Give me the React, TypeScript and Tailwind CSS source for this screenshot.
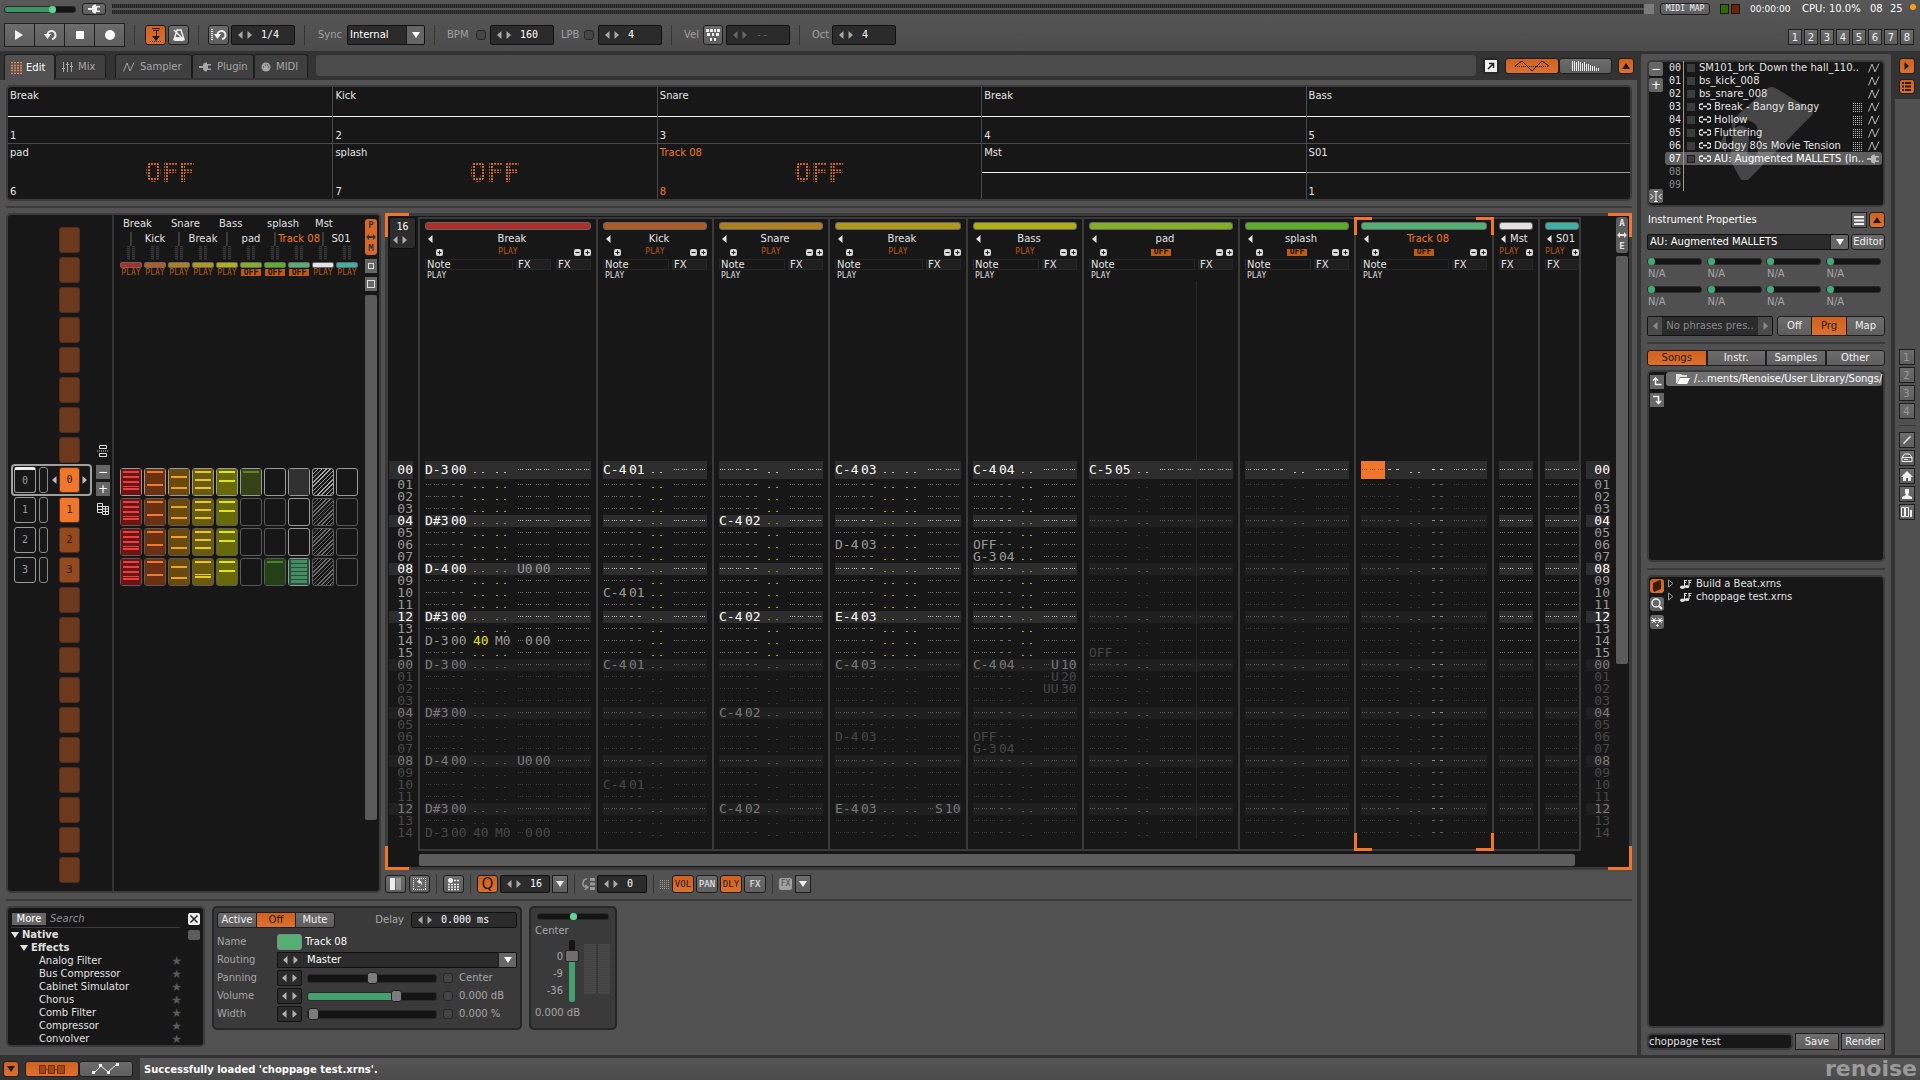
import { ReactNode } from "react";
import clsx from "clsx";

type Status = "PLAY" | "OFF";

type Track = {
  name: string;
  color: string;
  status: Status;
  // one letter per sub column: n = note, i = instrument, v = volume, d = delay, p = panning, f = half of an fx pair, g = gap
  cols: string;
  fx?: number;
  now: Record<number, string>;
  next: Record<number, string>;
};

const breakRows = {
  0: "D-3 00",
  4: "D#3 00",
  8: "D-4 00 .. .. U0 00",
  12: "D#3 00",
  14: "D-3 00 40 M0 -0 00",
};
const kickRows = { 0: "C-4 01", 10: "C-4 01" };
const snareRows = { 4: "C-4 02", 12: "C-4 02" };

const tracks: Track[] = [
  { name: "Break", color: "#aa2e2a", status: "PLAY", cols: "nivdffgff", fx: 2, now: breakRows, next: breakRows },
  { name: "Kick", color: "#ae5b28", status: "PLAY", cols: "nivff", now: kickRows, next: kickRows },
  { name: "Snare", color: "#ae7f22", status: "PLAY", cols: "nivff", now: snareRows, next: snareRows },
  {
    name: "Break",
    color: "#ae991c",
    status: "PLAY",
    cols: "nivdff",
    now: { 0: "C-4 03", 6: "D-4 03", 12: "E-4 03" },
    next: { 0: "C-4 03", 6: "D-4 03", 12: "E-4 03 .. .. -S 10" },
  },
  {
    name: "Bass",
    color: "#adb016",
    status: "PLAY",
    cols: "nivff",
    now: { 0: "C-4 04", 6: "OFF", 7: "G-3 04" },
    next: { 0: "C-4 04 .. -U 10", 1: "--- -- .. -U 20", 2: "--- -- .. UU 30", 6: "OFF", 7: "G-3 04" },
  },
  { name: "pad", color: "#84ad28", status: "OFF", cols: "nivffgff", now: { 0: "C-5 05", 15: "OFF" }, next: {} },
  { name: "splash", color: "#5cae28", status: "OFF", cols: "nivff", now: {}, next: {} },
  { name: "Track 08", color: "#54b072", status: "OFF", cols: "nivpff", now: {}, next: {} },
  { name: "Mst", color: "#e2e2e2", status: "PLAY", cols: "ff", now: {}, next: {} },
  { name: "S01", color: "#3fb0a4", status: "PLAY", cols: "ff", now: {}, next: {} },
];

const CURRENT = 7;

const instruments = [
  { name: "SM101_brk_Down the hall_110..", wave: true },
  { name: "bs_kick_008", wave: true },
  { name: "bs_snare_008", wave: true },
  { name: "Break - Bangy Bangy", link: true, phrase: true, wave: true },
  { name: "Hollow", link: true, phrase: true, wave: true },
  { name: "Fluttering", link: true, phrase: true, wave: true },
  { name: "Dodgy 80s Movie Tension", link: true, phrase: true, wave: true },
  { name: "AU: Augmented MALLETS (In..", link: true, plug: true },
  { name: "" },
  { name: "" },
];

const effects = ["Analog Filter", "Bus Compressor", "Cabinet Simulator", "Chorus", "Comb Filter", "Compressor", "Convolver"];

const pad2 = (n: number) => String(n).padStart(2, "0");

const grayBtn = "bg-linear-to-b from-[#6c6c6c] to-[#5e5e5e] border border-[#1e1e1e] text-[#f0f0f0]";
const orangeBtn = "bg-linear-to-b from-[#d0611f] to-[#dc7030] border border-[#1e1e1e] text-[#1c1c1c]";
const sunken = "bg-[#2b2b2b] border border-[#111] rounded-[2px]";
const well = "bg-[#171717] border-2 border-[#3a3a3a] rounded-[5px]";

function Btn({ on, className, label, children }: { on?: boolean; className?: string; label?: string; children?: ReactNode }) {
  return (
    <button
      aria-label={label}
      className={clsx("flex flex-none items-center justify-center rounded-[3px] leading-none", on ? orangeBtn : grayBtn, className)}
    >
      {children}
    </button>
  );
}

/* ---------- icons ---------- */

function Svg({ w = 12, h = 12, children, className }: { w?: number; h?: number; children: ReactNode; className?: string }) {
  return (
    <svg width={w} height={h} viewBox={`0 0 ${w} ${h}`} className={clsx("flex-none", className)} fill="currentColor">
      {children}
    </svg>
  );
}

const Left = () => <Svg w={5} h={8}><path d="M4.5 0v8L0 4z" /></Svg>;
const Right = () => <Svg w={5} h={8}><path d="M.5 0v8L5 4z" /></Svg>;
const Down = () => <Svg w={8} h={6}><path d="M0 0h8L4 6z" /></Svg>;
const Up = () => <Svg w={8} h={6}><path d="M0 6h8L4 0z" /></Svg>;
const Wave = () => (
  <Svg w={12} h={10}><path d="M.5 9.5 4 1l3 8L11 .5" fill="none" stroke="currentColor" /></Svg>
);
const Plug = () => (
  <Svg w={13} h={10}><path d="M0 4h4v2H0zM4 2.5C5 1 6 .5 8 .5V2h4v1.5H9v3h3V8H8v1.5C6 9.5 5 9 4 7.5z" /></Svg>
);
const DotGrid = () => (
  <Svg w={12} h={12}>
    <path d="M1 .5h11M1 3.500h11M1 6h11M1 8.500h11M1 11.500h11" stroke="currentColor" strokeWidth="1.500" strokeDasharray="2 1" />
  </Svg>
);
const Loop = () => (
  <Svg w={14} h={12}>
    <path d="M4.500 6A4 4 0 1 1 9 10" fill="none" stroke="currentColor" strokeWidth="2" />
    <path d="M1 5h7l-3.500 5z" />
  </Svg>
);
const Phrase = () => (
  <Svg w={10} h={10}>
    <path d="M0 1.500h10M0 3.500h10M0 5.500h10M0 7.500h10M0 9.500h10" stroke="currentColor" strokeDasharray="1 1" />
  </Svg>
);
const Link = () => (
  <Svg w={12} h={7}>
    <path d="M4 1H2.500a1.500 1.500 0 0 0 0 5H4M8 1h1.500a1.500 1.500 0 0 1 0 5H8M4 3.500h4" fill="none" stroke="currentColor" strokeWidth="1.300" />
  </Svg>
);

/* ---------- small controls ---------- */

function Spin({ value, label, className, dim }: { value: string; label: string; className?: string; dim?: boolean }) {
  return (
    <div className={clsx("flex flex-none items-center gap-1 pl-1.5", sunken, dim ? "text-[#666]" : "text-[#a8a8a8]", className)}>
      <button aria-label={`${label} down`}><Left /></button>
      <button aria-label={`${label} up`}><Right /></button>
      <input
        aria-label={label}
        defaultValue={value}
        className={clsx("w-0 flex-1 bg-transparent pl-[5px] font-['DejaVu_Sans_Mono',monospace] outline-none", dim ? "text-[#666]" : "text-white")}
      />
    </div>
  );
}

function Select({ value, label, className, pad }: { value: string; label: string; className?: string; pad?: string }) {
  return (
    <div className={clsx("flex overflow-hidden", sunken, className)}>
      <select aria-label={label} className={clsx("min-w-0 flex-1 appearance-none bg-transparent text-white outline-none", pad ?? "pl-0.5")}>
        <option>{value}</option>
      </select>
      <span className="flex w-[18px] flex-none items-center justify-center border-l border-[#1e1e1e] bg-[#666] text-white">
        <Down />
      </span>
    </div>
  );
}

function Check({ label }: { label: string }) {
  return <input type="checkbox" aria-label={label} className="size-2.5 flex-none appearance-none rounded-[3px] border border-[#262626] bg-[#454545]" />;
}

const rangeBase =
  "block min-w-0 appearance-none rounded-[3px] border border-[#2a2a2a] bg-[#141414] [&::-webkit-slider-thumb]:appearance-none [&::-webkit-slider-thumb]:border [&::-webkit-slider-thumb]:border-[#1e1e1e]";
const greenDot =
  "h-[7px] [&::-webkit-slider-thumb]:size-[7px] [&::-webkit-slider-thumb]:rounded-[3px] [&::-webkit-slider-thumb]:border-0";
const grayThumb =
  "h-[9px] [&::-webkit-slider-thumb]:h-3 [&::-webkit-slider-thumb]:w-[11px] [&::-webkit-slider-thumb]:rounded-[3px] [&::-webkit-slider-thumb]:bg-[#7c7c7c]";

const Sep = () => <div className="h-5 w-px flex-none bg-[#363636]" />;
const Rule = ({ className }: { className?: string }) => <div className={clsx("h-0.5 flex-none bg-[#3a3a3a]", className)} />;

/* ---------- header ---------- */

function Header() {
  return (
    <header className="h-[51px] flex-none bg-linear-to-b from-[#575757] to-[#4c4c4c] text-[#a0a0a0]">
      <div className="flex h-[18px] items-center gap-[6px] pl-1 pr-1">
        <input
          type="range"
          aria-label="Master volume"
          defaultValue={70}
          className={clsx(rangeBase, greenDot, "w-[72px] bg-linear-to-r from-[#3c9467] from-68% to-[#141414] to-68% [&::-webkit-slider-thumb]:bg-[#5cd690]")}
        />
        <Btn className="h-3 w-6" label="Audio"><Plug /></Btn>
        <div className="flex flex-1 flex-col gap-0.5">
          <div className="h-1 bg-[repeating-linear-gradient(90deg,#222_0px,#222_1px,#3c3c3c_1px,#3c3c3c_2px)]" />
          <div className="h-1 bg-[repeating-linear-gradient(90deg,#222_0px,#222_1px,#3c3c3c_1px,#3c3c3c_2px)]" />
        </div>
        <div className="-ml-1.5 h-2.5 w-2.5 bg-[#7a7a7a]" />
        <Btn className="h-3 w-[50px] font-['DejaVu_Sans_Mono',monospace] text-[8px]">MIDI MAP</Btn>
        <div className="flex gap-0.5 pl-1 pr-1">
          <div className="h-2.5 w-[9px] border border-[#161616] bg-[#2f6c08]" />
          <div className="h-2.5 w-[9px] border border-[#161616] bg-[#6c2408]" />
        </div>
        <span className="w-[46px] text-[9px] text-white">00:00:00</span>
        <span className="w-[62px] whitespace-nowrap text-white">CPU: 10.0%</span>
        <span className="w-3.5 text-white">08</span>
        <span className="w-3.5 text-white">25</span>
        <span className="mb-1 size-1.5 rounded-full bg-[#ff9d0a]" />
      </div>
      <div className="flex h-[33px] items-center gap-[9px] pl-1 pr-1.5">
        <div className="flex">
          <Btn className="h-6 w-[31px] rounded-none" label="Play"><Svg w={9} h={10}><path d="M0 0v10l8-5z" /></Svg></Btn>
          <Btn className="-ml-px h-6 w-[31px] rounded-none" label="Loop"><Loop /></Btn>
          <Btn className="-ml-px h-6 w-[31px] rounded-none" label="Stop"><span className="size-2 bg-white" /></Btn>
          <Btn className="-ml-px h-6 w-[31px] rounded-none" label="Record"><span className="size-2.5 rounded-full bg-white" /></Btn>
        </div>
        <Sep />
        <div className="flex gap-0.5 pl-px">
          <Btn on className="h-5 w-[21px]" label="Follow">
            <Svg w={12} h={14}>
              <path d="M2 .5h8M3 2.500h6M6.500 2v8" fill="none" stroke="currentColor" />
              <path d="M2 8h8l-4 5z" />
              <path d="M0 13.500h12" stroke="currentColor" strokeDasharray="1 1" />
            </Svg>
          </Btn>
          <Btn className="h-5 w-[21px]" label="Metronome">
            <Svg w={12} h={14}><path d="M4 2h4l3 9.500H1zM1 2l7 7" fill="none" stroke="currentColor" strokeWidth="1.500" /><path d="M1.500 9h9v4h-9z" /></Svg>
          </Btn>
        </div>
        <Sep />
        <div className="flex gap-0.5">
          <Btn className="h-5 w-[21px]" label="Block loop"><Svg w={2} h={12}><path d="M1 0v12" stroke="currentColor" strokeWidth="2" strokeDasharray="1 1" /></Svg><Loop /></Btn>
          <Spin className="h-5 w-16" value="1/4" label="Block size" />
        </div>
        <Sep />
        <div className="flex items-center gap-[3px] pl-1">
          <span className="w-[26px]">Sync</span>
          <Select className="h-5 w-[78px]" value="Internal" label="Sync" />
        </div>
        <Sep />
        <div className="flex items-center gap-1 pl-[3px]">
          <span className="w-[25px]">BPM</span>
          <Check label="Automate BPM" />
          <Spin className="h-5 w-16" value="160" label="BPM" />
          <span className="ml-[3px] w-[19px]">LPB</span>
          <Check label="Automate LPB" />
          <Spin className="h-5 w-16" value="4" label="LPB" />
        </div>
        <Sep />
        <div className="flex items-center gap-[3px] pl-[3px]">
          <span className="w-4">Vel</span>
          <Btn className="h-5 w-5" label="Keyboard velocity">
            <Svg w={14} h={12}><path d="M0 0h3v3H0zM4 0h3v3H4zM8 0h2v3H8zM11 0h3v3h-3zM1 4h3v3H1zM6 4h2v3H6zM10 4h3v3h-3zM4 9h2v3H4zM8 9h2v3H8z" /></Svg>
          </Btn>
          <Spin dim className="h-5 w-16" value="--" label="Velocity" />
        </div>
        <Sep />
        <div className="flex items-center gap-0.5 pl-[3px]">
          <span className="w-[18px]">Oct</span>
          <Spin className="h-5 w-16" value="4" label="Octave" />
        </div>
        <div className="mb-1.5 ml-auto flex gap-0.5 self-end">
          {[1, 2, 3, 4, 5, 6, 7, 8].map((n) => (
            <Btn key={n} className="h-4 w-[14px] rounded-none pt-0.5">{n}</Btn>
          ))}
        </div>
      </div>
    </header>
  );
}

/* ---------- tabs ---------- */

function TabStrip() {
  const tab = "flex items-center rounded-t-[3px] border border-b-0 border-[#1c1c1c]";
  const idle = "mb-0.5 gap-[5px] bg-[#3f3f3f] text-[#a6a6a6]";
  return (
    <nav className="flex h-[29px] flex-none pl-1 pr-[3px] pt-[3px]">
      <button className={clsx(tab, "w-[51px] gap-1 bg-[#515151] pl-[5px] text-white")}><span className="text-[#e8875a]"><DotGrid /></span>Edit</button>
      <button className={clsx(tab, idle, "w-[51px] pl-1.5")}>
        <Svg w={11} h={10}><path d="M1.500 0v10M5.500 0v10M9.500 0v10M0 6.500h3M4 2.500h3M8 4.500h3" stroke="currentColor" /></Svg>Mix
      </button>
      <button className={clsx(tab, idle, "ml-[9px] w-[77px] pl-[7px]")}><Wave />Sampler</button>
      <button className={clsx(tab, idle, "w-[62px] pl-1.5")}><Plug />Plugin</button>
      <button className={clsx(tab, idle, "w-[54px] pl-1.5")}>
        <Svg w={10} h={10}><circle cx="5" cy="5" r="4.500" /><path d="M2 5h1M4 3h1M6 3h1M7 5h1" stroke="#333" /></Svg>MIDI
      </button>
      <div className="ml-2 mr-[7px] mt-px h-[21px] flex-1 rounded-[3px] bg-[#4b4b4b]" />
      <div className="mt-1 flex h-4 items-center gap-1.5">
        <button aria-label="Detach" className="flex size-4 items-center justify-center rounded-[2px] border-2 border-[#262626] bg-[#eee] text-[#222]">
          <Svg w={8} h={8}><path d="M1 7 6 2M2 1.500h4.500V6" fill="none" stroke="currentColor" strokeWidth="1.500" /></Svg>
        </button>
        <div className="flex">
          <Btn on className="h-4 w-[54px]" label="Scopes">
            <Svg w={34} h={10}><path d="M0 5 7 0l10 10L27 0l7 5" fill="none" stroke="currentColor" /><path d="M0 5.500h34" stroke="currentColor" strokeDasharray="1 1" /></Svg>
          </Btn>
          <Btn className="h-4 w-[53px]" label="Spectrum">
            <Svg w={28} h={10}><path d="M.5 0v10M2.500 0v10M4.500 1v9M6.500 0v10M8.500 1v9M10.500 2v8M12.500 1v9M14.500 3v7M16.500 3v7M18.500 4v6M20.500 5v5M22.500 5v5M24.500 7v3M26.500 7v3" stroke="currentColor" /></Svg>
          </Btn>
        </div>
        <Btn on className="size-4" label="Collapse"><Up /></Btn>
      </div>
    </nav>
  );
}

/* ---------- track scopes ---------- */

function Scopes() {
  return (
    <section className={clsx(well, "grid h-[116px] flex-none grid-cols-5 grid-rows-2 overflow-hidden")}>
      {tracks.map((t, i) => (
        <div
          key={i}
          className={clsx(
            "flex flex-col justify-between px-0.5 pb-px pt-[3px]",
            i % 5 > 0 && "border-l border-[#4a4a4a]",
            i > 4 && "border-t border-[#4a4a4a]",
            i === CURRENT ? "text-[#f07830]" : "text-[#e4e4e4]"
          )}
        >
          <span className="leading-3">{t.name}</span>
          {t.status === "OFF" ? (
            <span className="self-center font-['DejaVu_Sans_Mono',monospace] text-[28px] font-bold leading-5 text-[#d0651f] [mask-composite:intersect] [mask-image:repeating-linear-gradient(90deg,#000_0px,#000_2px,transparent_2px,transparent_3px),repeating-linear-gradient(#000_0px,#000_2px,transparent_2px,transparent_3px)]">
              OFF
            </span>
          ) : (
            <div className={clsx("-mx-0.5 h-px", i === 9 ? "bg-[#9a9a9a]" : "bg-[#f0f0f0]")} />
          )}
          <span className="h-3 leading-3">{i < 8 ? i + 1 : i === 9 ? 1 : ""}</span>
        </div>
      ))}
    </section>
  );
}

/* ---------- pattern matrix ---------- */

type Block = { bg: string; fg: string; bars: number[][] };

const redBlock: Block = { bg: "#6a1414", fg: "#e84040", bars: [[3, 2], [8, 2], [13, 2], [18, 1], [20, 2]] };
const kickBlock: Block = { bg: "#6a3010", fg: "#e87a34", bars: [[3, 2], [16, 2]] };
const snareBlock: Block = { bg: "#6a4a0c", fg: "#e8a428", bars: [[8, 2], [19, 2]] };
const hatBlock: Block = { bg: "#6a5a0c", fg: "#e8c828", bars: [[3, 2], [11, 2], [19, 2]] };
const hatBlock2: Block = { bg: "#6a5a0c", fg: "#e8c828", bars: [[3, 2], [16, 1], [18, 2]] };
const bassBlock: Block = { bg: "#686a0a", fg: "#e0e41c", bars: [[3, 2], [12, 2]] };
const padBlock: Block = { bg: "#344216", fg: "#668428", bars: [[3, 2]] };
const splashBlock: Block = { bg: "#244016", fg: "#4a8428", bars: [[3, 2]] };
const synthBlock: Block = { bg: "#24503a", fg: "#458c62", bars: [[2, 3], [6, 3], [10, 3], [14, 3], [18, 3], [22, 3]] };
const cursorBlock: Block = { bg: "#303030", fg: "#303030", bars: [] };

const matrix: (Block | null)[][] = [
  [redBlock, kickBlock, snareBlock, hatBlock, bassBlock, padBlock, null, cursorBlock, null, null],
  [redBlock, kickBlock, snareBlock, hatBlock, bassBlock, null, null, null, null, null],
  [redBlock, kickBlock, snareBlock, hatBlock, bassBlock, null, null, null, null, null],
  [redBlock, kickBlock, snareBlock, hatBlock2, bassBlock, null, splashBlock, synthBlock, null, null],
];

function MatrixCell({ row, col }: { row: number; col: number }) {
  const block = matrix[row][col];
  const bright = row === 0 || col === CURRENT;
  return (
    <button
      aria-label={`Pattern ${row}, ${tracks[col].name}`}
      className={clsx(
        "h-7 w-[22px] rounded-[3px] border",
        bright ? "border-[#9a9a9a]" : "border-[#5a5a5a]",
        col === 8 && (row === 0
          ? "bg-[repeating-linear-gradient(135deg,#a0a0a0_0px,#a0a0a0_1px,#171717_1px,#171717_3px)]"
          : "bg-[repeating-linear-gradient(135deg,#6a6a6a_0px,#6a6a6a_1px,#171717_1px,#171717_3px)]")
      )}
    >
      {block && (
        <svg width="20" height="26" viewBox="0 0 20 26" shapeRendering="crispEdges">
          <rect width="20" height="26" fill={block.bg} />
          {block.bars.map(([y, h]) => (
            <rect key={y} x="2" y={y - 1} width="16" height={h} fill={block.fg} />
          ))}
        </svg>
      )}
    </button>
  );
}

function StatusTag({ status }: { status: Status }) {
  return (
    <button
      className={clsx(
        "flex h-[7px] w-5 flex-none items-center justify-center font-['DejaVu_Sans_Mono',monospace] text-[8px] leading-none",
        status === "OFF" ? "bg-[#bd5a18] font-bold text-[#171717]" : "text-[#bd5a18]"
      )}
    >
      {status}
    </button>
  );
}

function Sequencer() {
  return (
    <div className="flex w-[106px] flex-none flex-col gap-1 border-r-2 border-[#333] pt-3">
      {Array.from({ length: 22 }, (_, i) => {
        const n = i - 8;
        const live = n >= 0 && n < 4;
        return (
          <div key={i} className={clsx("flex h-[26px] flex-none items-center", live ? "pl-1.5" : "pl-[51px]")}>
            {live && (
              <div className="flex w-[45px] items-center gap-[3px]">
                <button className={clsx("flex h-[26px] w-[22px] items-center justify-center rounded-[3px] border border-[#999] font-['DejaVu_Sans_Mono',monospace] text-[#999]", n === 0 && "border-t-[3px] border-t-[#eee]")}>
                  {n}
                </button>
                <span className="h-[26px] w-[9px] rounded-[3px] border border-[#888]" />
                {n === 0 && <span className="pl-px text-[#bbb]"><Left /></span>}
              </div>
            )}
            <button
              aria-label={live ? undefined : "Empty slot"}
              className={clsx(
                "h-[26px] w-[21px] rounded-[3px] border border-[#552c17] font-['DejaVu_Sans_Mono',monospace] text-[#1c1c1c]",
                n === 0 || n === 1 ? "bg-[#f0762c]" : live ? "bg-[#94491f]" : "bg-[#6c391f]"
              )}
            >
              {live ? n : ""}
            </button>
            {n === 0 && <span className="pl-0.5 text-[#bbb]"><Right /></span>}
          </div>
        );
      })}
    </div>
  );
}

function PatternMatrix() {
  return (
    <section className={clsx(well, "relative flex w-[375px] flex-none")}>
      <Sequencer />
      {/* frame round the playing slot, with its insert and delete buttons */}
      <div className="pointer-events-none absolute left-[3px] top-[249px] h-8 w-[81px] rounded-[4px] border-2 border-[#a0a0a0]" />
      <div className="absolute left-[88px] top-[229px] flex w-[14px] flex-col items-center gap-[3px] text-[#ddd]">
        <Svg w={12} h={14} className="mb-1"><path d="M2.500 1.500h7v3h-7zM2.500 9.500h7v3h-7z" fill="none" stroke="currentColor" /><path d="M0 7h12" stroke="currentColor" strokeDasharray="1 1" /></Svg>
        <button className="flex h-[14px] w-[14px] items-center justify-center bg-[#666] text-xs text-white">−</button>
        <button className="flex h-[14px] w-[14px] items-center justify-center bg-[#666] text-xs text-white">+</button>
        <Svg w={12} h={12} className="mt-1"><path d="M.5.500h5v9h-5zM5.500 3.500h6v8h-6zM.5 3.500h5M.5 6.500h5M5.500 6h6M5.500 8.500h6M8.500 3.500v8" fill="none" stroke="currentColor" /></Svg>
      </div>

      <div className="flex min-w-0 flex-1 flex-col pl-1.5 pt-px">
        <div className="flex h-4 items-center text-[#e0e0e0]">
          {tracks.filter((_, i) => i % 2 === 0).map((t, i) => (
            <span key={i} className="w-12 pl-[3px]">{t.name}</span>
          ))}
        </div>
        <div className="flex h-[14px] items-center gap-0.5 text-[#e0e0e0]">
          {tracks.map((t, i) => (
            <span key={i} className={clsx("flex w-[22px] justify-center whitespace-nowrap", i === CURRENT && "text-[#f07830]", i === 9 && "-ml-1.5")}>
              {i % 2 ? t.name : <span className="h-[14px] w-0.5 bg-[#3a3a3a]" />}
            </span>
          ))}
        </div>
        <div className="flex gap-0.5">
          {tracks.map((t, i) => (
            <div key={i} className="flex w-[22px] flex-col items-center">
              <div className="flex h-[14px] gap-0.5">
                <span className="w-[3px] bg-[repeating-linear-gradient(#3a3a3a_0px,#3a3a3a_1px,#222_1px,#222_2px)]" />
                <span className="w-[3px] bg-[repeating-linear-gradient(#3a3a3a_0px,#3a3a3a_1px,#222_1px,#222_2px)]" />
              </div>
              <span className="mb-px mt-0.5 h-1.5 w-[22px] rounded-[2px] border border-[#666]" style={{ background: t.color }} />
              <StatusTag status={t.status} />
            </div>
          ))}
        </div>
        <div className="mt-48 flex flex-col gap-0.5">
          {matrix.map((cells, row) => (
            <div key={row} className="flex gap-0.5">
              {cells.map((_, col) => <MatrixCell key={col} row={row} col={col} />)}
            </div>
          ))}
        </div>
      </div>

      <div className="mr-0.5 flex w-3 flex-none flex-col gap-1 pt-1">
        <button className="flex h-9 flex-none flex-col items-center justify-between rounded-[3px] bg-[#d8682a] py-0.5 font-['DejaVu_Sans_Mono',monospace] text-[9px] font-bold leading-none text-[#333]">
          <span>P</span>
          <Svg w={10} h={6}><path d="M0 3l3-3v2h4V0l3 3-3 3V4H3v2z" /></Svg>
          <span>M</span>
        </button>
        <button aria-label="Small blocks" className="flex h-[14px] flex-none items-center justify-center bg-[#666]"><span className="size-1.5 border border-[#ddd]" /></button>
        <button aria-label="Large blocks" className="flex h-[14px] flex-none items-center justify-center bg-[#666]"><span className="size-2 border border-[#ddd]" /></button>
        <div className="mb-[71px] flex-1 rounded-[2px] bg-[#5a5a5a]" />
      </div>
    </section>
  );
}

/* ---------- pattern editor ---------- */

const markPath: Record<string, string> = {
  dotted: "M1 5.500h1m1 0h1m1 0h1",
  dash: "M1 5.500h3",
  low: "M1 8.500h2",
};

function Marks({ kind, count }: { kind: string; count: number }) {
  return (
    <svg width={count * 8} height="12" className="flex-none" fill="none" stroke="currentColor" shapeRendering="crispEdges">
      {Array.from({ length: count }, (_, i) => (
        <path key={i} d={markPath[kind]} transform={`translate(${i * 8} 0)`} />
      ))}
    </svg>
  );
}

// text, mark, volume, delay and panning colours for the kinds of line
type Tone = { bg: string; text: string; mark: string; vol: string; dly: string; pan: string };

const tones: Record<string, Tone> = {
  head: { bg: "bg-[#2d2d2d]", text: "text-white", mark: "text-[#bdbdbd]", vol: "text-[#bdbdbd]", dly: "text-[#bdbdbd]", pan: "text-white" },
  beat: { bg: "bg-[#2d2d2d]", text: "text-white", mark: "text-[#bdbdbd]", vol: "text-[#9a942c]", dly: "text-[#80907a]", pan: "text-white" },
  line: { bg: "", text: "text-[#9a9a9a]", mark: "text-[#707070]", vol: "text-[#a39c14]", dly: "text-[#74a062]", pan: "text-white" },
  dimBeat: { bg: "bg-[#202020]", text: "text-[#7a7a7a]", mark: "text-[#5c5c5c]", vol: "text-[#5c5c5c]", dly: "text-[#5c5c5c]", pan: "text-[#8c8c8c]" },
  dimLine: { bg: "", text: "text-[#484848]", mark: "text-[#3c3c3c]", vol: "text-[#3c3c3c]", dly: "text-[#3c3c3c]", pan: "text-[#606060]" },
};

const lines = [...Array(16).keys(), ...Array(15).keys()].map((n, i) => ({ n, next: i > 15, key: i }));

function toneOf(n: number, next: boolean, off: boolean) {
  if (!next && n === 0) return "head";
  if (next || off) return n % 4 === 0 ? "dimBeat" : "dimLine";
  return n % 4 === 0 ? "beat" : "line";
}

const fieldKinds: Record<string, string> = { n: "dotted", i: "dash", v: "low", d: "low", p: "dash", f: "dotted" };

function Line({ track, n, next, current }: { track: Track; n: number; next: boolean; current: boolean }) {
  const tone = tones[toneOf(n, next, track.status === "OFF")];
  const data = ((next ? track.next : track.now)[n] ?? "").split(" ");
  const head = n === 0 && !next;
  let at = 0;
  let fx = 0;
  return (
    <div className={clsx("flex flex-none items-center", head ? "h-[18px]" : "h-3", tone.bg)}>
      {track.cols.split("").map((c, i) => {
        if (c === "g") return <span key={i} className="w-1.5 flex-none" />;
        const value = data[at++] ?? "";
        const empty = value === "" || /^[-.]+$/.test(value);
        const size = c === "n" ? "w-[26px]" : c === "f" ? (fx++ % 2 ? "w-4" : "w-[18px]") : "w-[22px]";
        if (empty) {
          const color = c === "v" ? tone.vol : c === "d" ? tone.dly : c === "p" ? tone.pan : tone.mark;
          const cursor = current && head && c === "n";
          return (
            <span
              key={i}
              className={clsx("flex flex-none items-center", size, cursor ? "h-[18px] text-[#9a4a18]" : color)}
            >
              <span className={clsx("flex items-center", cursor && "h-[18px] bg-[#f0762c]")}>
                <Marks kind={fieldKinds[c]} count={c === "n" ? 3 : 2} />
              </span>
            </span>
          );
        }
        const lead = c === "f" && value[0] === "-";
        return (
          <span
            key={i}
            className={clsx(
              "flex flex-none items-center whitespace-pre font-['DejaVu_Sans_Mono',monospace] text-[13px] leading-3",
              size,
              c === "v" && !next ? "text-[#e8e010]" : c === "f" && !next ? "text-[#9a9a9a]" : tone.text
            )}
          >
            {lead && <span className={tone.mark}><Marks kind="dotted" count={1} /></span>}
            {lead ? value.slice(1) : value}
          </span>
        );
      })}
    </div>
  );
}

function LineNumbers() {
  return (
    <div className="flex w-6 flex-col font-['DejaVu_Sans_Mono',monospace] text-[13px]">
      {lines.map(({ n, next, key }) => {
        const tone = tones[toneOf(n, next, false)];
        return (
          <span key={key} className={clsx("flex items-center justify-end", key === 0 ? "h-[18px]" : "h-3 leading-3", tone.bg, tone.text)}>
            {pad2(n)}
          </span>
        );
      })}
    </div>
  );
}

function MiniBtn({ sign }: { sign: string }) {
  return (
    <button aria-label={sign === "+" ? "Add column" : "Remove column"} className="size-[7px] flex-none rounded-[2px] bg-[#d8d8d8] text-[#171717]">
      <Svg w={7} h={7}><path d={sign === "+" ? "M1.500 3.500h4M3.500 1.500v4" : "M1.500 3.500h4"} stroke="currentColor" /></Svg>
    </button>
  );
}

function TrackColumn({ track, index }: { track: Track; index: number }) {
  const narrow = track.cols === "ff";
  const current = index === CURRENT;
  const last = index === tracks.length - 1;
  return (
    <div className={clsx("relative flex flex-none flex-col border-l-2 border-[#3a3a3a] pb-2.5 pl-[5px] pt-[3px]", last ? "border-r-2" : "pr-[5px]")}>
      <div className="h-2 rounded-[3px] border border-[#666]" style={{ background: track.color }} />
      <div className="mt-px flex h-4 items-center text-[#e4e4e4]">
        <span className={narrow ? "w-2 pl-0.5" : "w-2.5 pl-[3px]"}><Left /></span>
        <span className={clsx("flex-1 whitespace-nowrap", narrow ? "pl-[3px]" : "pr-0.5 text-center", current && "text-[#f07830]")}>{track.name}</span>
      </div>
      <div className="mt-px flex h-2 items-center">
        {!narrow && (
          <span className="flex flex-1">
            <span className="w-[11px]" />
            <MiniBtn sign="+" />
          </span>
        )}
        <StatusTag status={track.status} />
        <span className="flex flex-1 justify-end gap-[3px]">
          {!narrow && <MiniBtn sign="-" />}
          <MiniBtn sign="+" />
        </span>
      </div>
      <div className="mt-[3px] flex h-[11px] gap-[3px] leading-[9px] text-[#e4e4e4]">
        {!narrow && <span className="flex-1 border border-[#262626] pl-px">Note</span>}
        {Array.from({ length: track.fx ?? 1 }, (_, i) => (
          <span key={i} className={clsx("border border-[#262626] bg-[#1f1f1f] pl-px", narrow ? "w-[34px]" : "w-[35px]", track.fx === 2 && i === 0 && "mr-0.5")}>FX</span>
        ))}
      </div>
      <div className="mb-auto h-[11px] pl-0.5 pt-px font-['DejaVu_Sans_Mono',monospace] text-[8px] leading-[9px] text-[#e0e0e0]">
        {narrow ? "" : "PLAY"}
      </div>
      {lines.map(({ n, next, key }) => (
        <Line key={key} track={track} n={n} next={next} current={current} />
      ))}
      {track.name === "pad" && <div className="absolute bottom-2.5 right-[41px] top-[62px] w-px bg-[#2a2a2a]" />}
      {current && <Corners className="-bottom-0.5 -left-0.5 -right-0.5 -top-0.5" size="h-[18px] w-[18px]" />}
    </div>
  );
}

function Corners({ className, size }: { className: string; size: string }) {
  return (
    <div className={clsx("pointer-events-none absolute z-10", className)}>
      <span className={clsx("absolute left-0 top-0 border-l-3 border-t-3 border-[#f0762c]", size)} />
      <span className={clsx("absolute right-0 top-0 border-r-3 border-t-3 border-[#f0762c]", size)} />
      <span className={clsx("absolute bottom-0 left-0 border-b-3 border-l-3 border-[#f0762c]", size)} />
      <span className={clsx("absolute bottom-0 right-0 border-b-3 border-r-3 border-[#f0762c]", size)} />
    </div>
  );
}

function PatternEditor() {
  return (
    <section className="relative flex flex-1 flex-col border-3 border-[#3a3a3a] bg-[#171717]">
      <Corners className="-inset-[3px]" size="size-6" />
      <div className="flex flex-1">
        <div className="flex flex-1 pt-px">
          <div className="flex w-[30px] flex-none flex-col justify-between pb-3 pl-px">
            <div className="z-20 flex h-8 w-[27px] flex-col items-center justify-center gap-1 rounded-[3px] border border-[#0c0c0c] bg-[#2c2c2c] pr-1.5">
              <span className="pl-1.5 font-['DejaVu_Sans_Mono',monospace] leading-none text-white">16</span>
              <span className="flex gap-1 text-[#a8a8a8]"><Left /><Right /></span>
            </div>
            <LineNumbers />
          </div>
          <div className="flex border-y-2 border-[#3a3a3a]">
            {tracks.map((t, i) => <TrackColumn key={i} track={t} index={i} />)}
          </div>
          <div className="flex flex-col justify-end pb-3 pl-[5px]"><LineNumbers /></div>
        </div>
        <div className="mr-px flex w-3 flex-none flex-col gap-[3px] pt-px">
          <button className="flex h-9 flex-none flex-col items-center justify-between rounded-[3px] bg-[#5e5e5e] py-0.5 font-['DejaVu_Sans_Mono',monospace] text-[9px] font-bold leading-none text-[#e4e4e4]">
            <span>A</span>
            <Svg w={10} h={6}><path d="M0 3l3-3v2h4V0l3 3-3 3V4H3v2z" /></Svg>
            <span>E</span>
          </button>
          <div className="h-[408px] rounded-[2px] bg-[#5a5a5a]" />
        </div>
      </div>
      <div className="mb-px ml-[31px] mr-[54px] mt-[3px] h-3 flex-none rounded-[2px] bg-[#5c5c5c]" />
    </section>
  );
}

function EditorToolbar() {
  const mini = "h-[18px] w-[22px] font-['DejaVu_Sans_Mono',monospace] text-[9px]";
  return (
    <div className="mt-[5px] flex h-[18px] flex-none items-center gap-1.5">
      <div className="flex gap-[3px]">
        <Btn className="h-[18px] w-[21px]" label="Columns"><Svg w={12} h={12}><path d="M0 0h5v12H0z" /><path d="M6 0h5v12H6z" opacity=".35" /></Svg></Btn>
        <Btn className="h-[18px] w-[21px]" label="Wrap">
          <Svg w={13} h={12}><path d="M0 .5h13M0 11.500h13M.5 0v12M12.500 0v12" stroke="currentColor" strokeDasharray="1 1" /><path d="M7 1v5L4 3.500zM6 3h1.500a3 3 0 1 1-3.500 5h2a1.500 1.500 0 1 0 1-3H6z" /></Svg>
        </Btn>
      </div>
      <Sep />
      <Btn className="h-[18px] w-[21px]" label="Step grid">
        <Svg w={12} h={13}><circle cx="2.500" cy="2.500" r="2.500" /><path d="M6 2.500h6M0 6.500h12M0 9h12M0 11.500h12" stroke="currentColor" strokeWidth="1.500" strokeDasharray="2 1" /></Svg>
      </Btn>
      <Sep />
      <div className="flex gap-0.5">
        <Btn on className="h-[18px] w-[21px] text-[15px]">Q</Btn>
        <Spin className="h-[18px] w-[50px]" value="16" label="Quantize" />
        <Btn className="h-[18px] w-4 rounded-none" label="Quantize unit"><Down /></Btn>
      </div>
      <Sep />
      <div className="flex items-center gap-0.5 text-[#999]">
        <Svg w={14} h={12}><path d="M6 1C1 1 1 9 4 9h2M4 7l3 2-3 3" fill="none" stroke="currentColor" strokeWidth="1.500" /><path d="M9 0h5v3H9zM9 4.500h5v3H9zM9 9h5v3H9z" /></Svg>
        <Spin className="h-[18px] w-[50px]" value="0" label="Edit step" />
      </div>
      <Sep />
      <div className="flex items-center gap-0.5 text-[#999]">
        <Phrase />
        <Btn on className={mini}>VOL</Btn>
        <Btn className={mini}>PAN</Btn>
        <Btn on className={mini}>DLY</Btn>
        <Btn className={mini}>FX</Btn>
      </div>
      <Sep />
      <div className="flex items-center gap-[3px]">
        <button className="flex h-3 w-[13px] items-center justify-center rounded-[2px] bg-[#a0a0a0] font-['DejaVu_Sans_Mono',monospace] text-[8px] leading-none text-[#4a4a4a]">FX</button>
        <Btn className="h-[18px] w-4 rounded-none" label="Effect menu"><Down /></Btn>
      </div>
    </div>
  );
}

/* ---------- bottom dock ---------- */

function EffectList() {
  return (
    <section className={clsx(well, "flex w-[199px] flex-none flex-col px-[3px] pt-[3px] text-[#e0e0e0]")}>
      <div className="flex h-4 items-center gap-1 pl-px">
        <button className="h-3 w-[34px] bg-[#666] leading-3 text-white">More</button>
        <input aria-label="Search effects" placeholder="Search" className="min-w-0 flex-1 bg-transparent italic outline-none placeholder:text-[#909090]" />
        <button aria-label="Clear" className="flex size-3 items-center justify-center rounded-[2px] bg-[#eee] text-[#222]">
          <Svg w={10} h={10}><path d="M1.500 1.500l7 7M8.500 1.500l-7 7" stroke="currentColor" strokeWidth="1.500" /></Svg>
        </button>
      </div>
      <div className="mr-5 h-px bg-[#3a3a3a]" />
      <div className="flex">
        <div className="flex-1 font-bold leading-[13px]">
          <div className="flex items-center gap-[3px]"><Down />Native</div>
          <div className="flex items-center gap-[3px] pl-[9px]"><Down />Effects</div>
        </div>
        <span className="mt-0.5 h-2.5 w-3 rounded-[2px] bg-[#5c5c5c]" />
      </div>
      <ul>
        {effects.map((e) => (
          <li key={e} className="flex h-[13px] items-center justify-between pl-7 pr-[18px]">
            {e}
            <span className="text-[12px] leading-none text-[#5a5a5a]">★</span>
          </li>
        ))}
      </ul>
    </section>
  );
}

const dock = "rounded-[5px] border-2 border-[#262626] bg-[#3a3a3a] text-[#a6a6a6]";

function StripRow({ name, value, range, className }: { name: string; value: string; range: number; className?: string }) {
  return (
    <div className="flex h-4 items-center">
      <span className="w-[60px]">{name}</span>
      <div className={clsx(sunken, "flex h-4 w-[25px] items-center justify-center gap-[5px] text-[#b0b0b0]")}><Left /><Right /></div>
      <input type="range" aria-label={name} defaultValue={range} className={clsx(rangeBase, grayThumb, "ml-[5px] mr-1.5 w-[130px]", className)} />
      <Check label={`Automate ${name}`} />
      <span className="pl-1.5">{value}</span>
    </div>
  );
}

function TrackStrip() {
  return (
    <section className={clsx(dock, "flex h-[124px] w-[310px] flex-none flex-col gap-0.5 px-[3px] pt-1")}>
      <div className="mb-1 flex items-center">
        <Btn className="h-4 w-10 rounded-r-none">Active</Btn>
        <Btn on className="-ml-px h-4 w-10 rounded-none">Off</Btn>
        <Btn className="-ml-px h-4 w-10 rounded-l-none">Mute</Btn>
        <span className="ml-auto pr-[7px]">Delay</span>
        <Spin className="h-4 w-[106px]" value="0.000 ms" label="Delay" />
      </div>
      <div className="flex h-4 items-center">
        <label htmlFor="track-name" className="w-[60px]">Name</label>
        <button aria-label="Track colour" className="h-4 w-[25px] rounded-[3px] border border-[#888] bg-[#54b072]" />
        <input id="track-name" defaultValue="Track 08" className="ml-[3px] w-32 bg-transparent text-white outline-none" />
      </div>
      <div className="flex h-4 items-center">
        <span className="w-[60px]">Routing</span>
        <div className="flex flex-1 items-center">
          <div className={clsx(sunken, "flex h-4 w-[25px] items-center justify-center gap-[5px] rounded-r-none border-r-0 text-[#b0b0b0]")}><Left /><Right /></div>
          <Select className="h-4 flex-1 rounded-l-none border-l-0" value="Master" label="Routing" pad="pl-[5px]" />
        </div>
      </div>
      <StripRow name="Panning" value="Center" range={50} />
      <StripRow name="Volume" value="0.000 dB" range={71} className="bg-linear-to-r from-[#45a070] from-68% to-[#141414] to-68%" />
      <StripRow name="Width" value="0.000 %" range={0} />
    </section>
  );
}

function MeterStrip() {
  return (
    <section className={clsx(dock, "flex h-[124px] w-[88px] flex-none flex-col px-1 pt-[5px]")}>
      <input type="range" aria-label="Pan" defaultValue={50} className={clsx(rangeBase, greenDot, "mx-0.5 [&::-webkit-slider-thumb]:bg-[#5cd690]")} />
      <span className="mt-[5px]">Center</span>
      <div className="mt-[3px] flex h-[62px]">
        <div className="w-[34px] pr-1.5 pt-2 text-right leading-[17px]">
          <div>0</div>
          <div>-9</div>
          <div>-36</div>
        </div>
        <div className="relative flex w-1.5 flex-col rounded-[2px] bg-[#141414]">
          <button aria-label="Fader" className="absolute -left-1 top-2.5 h-3 w-[14px] rounded-[2px] border border-[#222] bg-[#6e6e6e]" />
          <span className="mt-5 flex-1 rounded-[2px] bg-[#45a070]" />
        </div>
        <div className="mb-2 ml-[9px] mt-1 flex gap-0.5">
          <span className="w-3 bg-[repeating-linear-gradient(#4a4a4a_0px,#4a4a4a_1px,#424242_1px,#424242_2px)]" />
          <span className="w-3 bg-[repeating-linear-gradient(#4a4a4a_0px,#4a4a4a_1px,#424242_1px,#424242_2px)]" />
        </div>
      </div>
      <span className="mt-[5px]">0.000 dB</span>
    </section>
  );
}

/* ---------- right side ---------- */

function InstrumentList() {
  return (
    <section className={clsx(well, "relative flex h-[147px] flex-none text-[#e4e4e4]")}>
      <svg width="96" height="96" viewBox="0 0 96 96" className="absolute left-[70px] top-[22px]" fill="#454545">
        <path fillRule="evenodd" d="M49 4c3-2 6-1 9 1l34 21c3 2 2 4 0 6L30 95c-3 3-7 2-9-1L10 74c2-2 4-12 3-38zM17 38c8-3 16-2 20 3 4 7 4 22 0 31l-9-2c2-9 3-20 0-25-3-4-8-4-12-1z" />
        <path d="M0 63 7 46v22z" />
      </svg>
      <div className="flex w-4 flex-none flex-col gap-0.5">
        <button className="h-[14px] w-[14px] rounded-[2px] bg-[#666] text-xs leading-3 text-white">−</button>
        <button className="h-[14px] w-[14px] rounded-[2px] bg-[#666] text-xs leading-3 text-white">+</button>
        <button aria-label="Split" className="mb-0.5 mt-auto flex h-[14px] w-[14px] items-center justify-center rounded-[2px] bg-[#666] text-white">
          <Svg w={12} h={11}><path d="M6 0v11M4 .5h4M4 10.500h4M.5 3 3 5.500.500 8M11.500 3 9 5.500 11.500 8" fill="none" stroke="currentColor" /></Svg>
        </button>
      </div>
      <ol className="relative -mt-px flex-1 pr-px">
        {instruments.map((ins, i) => (
          <li key={i} className={clsx("flex h-[13px] items-center rounded-[3px] pl-1", i === 7 && "bg-[#cccccc66] text-white", i > 7 && "text-[#8a8a8a]")}>
            <span className="w-[14px] font-['DejaVu_Sans_Mono',monospace]">{pad2(i)}</span>
            <span className="h-[13px] w-px flex-none bg-[#999]" />
            <span className={clsx("ml-[3px] mr-1 size-2 flex-none", i < 8 && "bg-[#3c3c3c]", i === 7 && "border border-[#1c1c1c]")} />
            {ins.link && <span className="pr-[3px]"><Link /></span>}
            <span className="w-0 flex-1 whitespace-nowrap">{ins.name}</span>
            <span className="flex items-center gap-[5px] pr-0.5 text-[#b8b8b8]">
              {ins.phrase && <Phrase />}
              {ins.wave && <Wave />}
              {ins.plug && <Plug />}
            </span>
          </li>
        ))}
      </ol>
    </section>
  );
}

function InstrumentProperties() {
  return (
    <section className="flex flex-none flex-col">
      <div className="mt-[5px] flex items-center gap-0.5">
        <h2 className="flex-1 pl-px text-white">Instrument Properties</h2>
        <Btn className="size-4 rounded-none" label="Menu"><Svg w={10} h={9}><path d="M0 0h10v2H0zM0 3.500h10v2H0zM0 7h10v2H0z" /></Svg></Btn>
        <Btn on className="size-4" label="Collapse"><Up /></Btn>
      </div>
      <div className="mt-1.5 flex gap-0.5">
        <Select className="h-4 flex-1" value="AU: Augmented MALLETS" label="Plugin" />
        <Btn className="h-4 w-[34px]">Editor</Btn>
      </div>
      <div className="mt-2 grid grid-cols-4 gap-y-[5px] text-[#a6a6a6]">
        {[1, 2, 3, 4, 5, 6, 7, 8].map((n) => (
          <div key={n} className="flex h-[23px] flex-col">
            <input type="range" aria-label={`Macro ${n}`} defaultValue={0} className={clsx(rangeBase, greenDot, "w-[55px] [&::-webkit-slider-thumb]:bg-[#45a878]")} />
            <span className="pl-px pt-0.5 leading-[14px]">N/A</span>
          </div>
        ))}
      </div>
      <div className="mt-[7px] flex gap-1">
        <div className={clsx(sunken, "flex h-5 flex-1 items-stretch text-[#8a8a8a]")}>
          <button aria-label="Previous phrase" className="flex w-[14px] items-center justify-center bg-[#4a4a4a]"><Left /></button>
          <span className="flex flex-1 items-center justify-center whitespace-nowrap">No phrases pres..</span>
          <button aria-label="Next phrase" className="flex w-[14px] items-center justify-center bg-[#4a4a4a]"><Right /></button>
        </div>
        <div className="flex">
          <Btn className="h-5 w-[35px] rounded-r-none">Off</Btn>
          <Btn on className="-ml-px h-5 w-9 rounded-none">Prg</Btn>
          <Btn className="-ml-px h-5 w-[39px] rounded-l-none">Map</Btn>
        </div>
      </div>
    </section>
  );
}

function Browser() {
  const tool = "flex h-[14px] w-[14px] items-center justify-center bg-[#666] text-white";
  return (
    <>
      <div className="mt-1.5 grid flex-none grid-cols-4">
        <Btn on className="h-4 rounded-r-none">Songs</Btn>
        <Btn className="h-4 rounded-none">Instr.</Btn>
        <Btn className="h-4 rounded-none">Samples</Btn>
        <Btn className="h-4 rounded-l-none">Other</Btn>
      </div>
      <div className={clsx(well, "mt-1 flex h-[192px] flex-none")}>
        <div className="flex flex-col gap-1 pl-px pt-[3px]">
          <button aria-label="Parent folder" className={tool}><Svg w={10} h={10}><path d="M1 3.500 3.500 1 6 3.500M3.500 1.500v6h6" fill="none" stroke="currentColor" strokeWidth="1.500" /></Svg></button>
          <button aria-label="Enter folder" className={tool}><Svg w={10} h={10}><path d="M1 1.500h5.500v7M4 6l2.500 2.500L9 6" fill="none" stroke="currentColor" strokeWidth="1.500" /></Svg></button>
        </div>
        <div className="ml-0.5 mr-px flex h-[14px] flex-1 items-center gap-1 rounded-[3px] bg-[#707070] pl-2.5 text-white">
          <Svg w={14} h={10}><path d="M0 0h5l1 1h5v2H4L1 9H0z" opacity=".8" /><path d="M4 4h10l-3 6H1z" /></Svg>
          <span className="w-0 flex-1 whitespace-nowrap">/...ments/Renoise/User Library/Songs/</span>
        </div>
      </div>
      <Rule className="mt-1.5" />
      <div className={clsx(well, "mt-[5px] flex min-h-0 flex-1 gap-1 text-[#e0e0e0]")}>
        <div className="flex flex-col gap-1 pl-px pt-0.5">
          <Btn on className="size-[14px] rounded-[2px] border-0" label="Disk"><Svg w={10} h={12}><path d="M1 3l7-3 1 1v8l-7 3-1-2z" fill="#3a1c0c" /></Svg></Btn>
          <Btn className="size-[14px] rounded-[2px] border-0" label="Find"><Svg w={12} h={12}><circle cx="5" cy="5" r="4" fill="none" stroke="currentColor" strokeWidth="1.500" /><path d="m8 8 3 3" stroke="currentColor" strokeWidth="2" /></Svg></Btn>
          <Btn className="size-[14px] rounded-[2px] border-0" label="Options"><Svg w={12} h={9}><path d="M1 0h1v1H1zM4 0h1v1H4zM0 2h6v1H0zM1 4h1v1H1zM4 4h1v1H4zM2 1h2v3H2zM7 0h1v1H7zM10 0h1v1h-1zM6 2h6v1H6zM7 4h1v1H7zM10 4h1v1h-1zM8 1h2v3H8zM5 7h3v1H5zM6 6h1v3H6z" /></Svg></Btn>
        </div>
        <ul className="flex-1">
          {["Build a Beat.xrns", "choppage test.xrns"].map((f) => (
            <li key={f} className="flex h-[13px] items-center">
              <Svg w={6} h={9}><path d="M.5 1v7L5 4.500z" fill="none" stroke="#999" /></Svg>
              <Svg w={12} h={10} className="ml-1.5"><path d="M4 1.500h3M4.500 1v7M8.500 1.500h3M9 1v6M6 3.500h-1M11 3.500H9" stroke="currentColor" fill="none" /><ellipse cx="2.500" cy="8.300" rx="2.500" ry="1.700" /><ellipse cx="7" cy="7.500" rx="2.300" ry="1.600" /></Svg>
              <span className="ml-1">{f}</span>
            </li>
          ))}
        </ul>
      </div>
      <div className="mb-[5px] mt-[5px] flex h-[17px] flex-none gap-0.5">
        <input aria-label="File name" defaultValue="choppage test" className="min-w-0 flex-1 rounded-[5px] border-2 border-[#3a3a3a] bg-[#171717] text-[#e0e0e0] outline-none" />
        <Btn className="h-[17px] w-11 rounded-none">Save</Btn>
        <Btn className="h-[17px] w-11 rounded-none">Render</Btn>
      </div>
    </>
  );
}

function Rail() {
  return (
    <aside className="flex w-[25px] flex-none flex-col">
      <div className="flex flex-col items-center gap-[5px] pb-[5px] pr-0.5 pt-[7px]">
        <Btn on className="h-4 w-4" label="Hide panel"><Right /></Btn>
        <Btn on className="h-[15px] w-4" label="Instruments"><Svg w={9} h={9}><path d="M0 0h2v2H0zM3 0h6v2H3zM0 3.500h2v2H0zM3 3.500h6v2H3zM0 7h2v2H0zM3 7h6v2H3z" /></Svg></Btn>
      </div>
      <div className="flex flex-1 flex-col items-center gap-0.5 bg-[#505050] pr-0.5 pt-[250px]">
        {[1, 2, 3, 4].map((n) => (
          <Btn key={n} className="size-4 rounded-none pt-0.5 text-[#9a9a9a]!">{n}</Btn>
        ))}
        <div className="my-1 h-px w-[18px] bg-[#3a3a3a]" />
        <Btn className="size-4 rounded-none" label="Edit"><Svg w={8} h={8}><path d="M.5 7.500l7-7" stroke="currentColor" strokeWidth="1.500" /></Svg></Btn>
        <Btn className="size-4 rounded-none" label="Disk"><Svg w={12} h={10}><path d="M1 4.500h10v4H1zM1 4.500 3.500 1h5L11 4.500M3 6.500h4" fill="none" stroke="currentColor" /></Svg></Btn>
        <Btn className="size-4 rounded-none" label="Home"><Svg w={12} h={10}><path d="M6 0l6 6h-2v4H7V7H5v3H2V6H0z" /></Svg></Btn>
        <Btn className="size-4 rounded-none" label="User"><Svg w={10} h={10}><path d="M3 0h4v4L6 6l4 2v2H0V8l4-2-1-2z" /></Svg></Btn>
        <Btn className="size-4 rounded-none" label="Library"><Svg w={11} h={10}><path d="M.5.500h3v9h-3zM4.500.500h3v9h-3z" fill="none" stroke="currentColor" /><path d="M9 3h2v7H9z" /></Svg></Btn>
      </div>
    </aside>
  );
}

function StatusBar() {
  return (
    <footer className="flex h-[25px] flex-none pt-[3px]">
      <div className="flex w-[140px] flex-none items-center pl-[3px]">
        <Btn on className="mr-1.5 size-4" label="Collapse dock"><Down /></Btn>
        <Btn on className="h-4 w-[54px]" label="Track effects">
          <Svg w={26} h={9}><path d="M.5.500h6v8h-6zM9.500.500h6v8h-6zM18.500.500h7v8h-7zM6 4.500h4M15 4.500h4" fill="#a0481a" stroke="#6e3212" /></Svg>
        </Btn>
        <Btn className="h-4 w-[54px]" label="Automation">
          <Svg w={28} h={12}><path d="M2 10 9 3l7 6 9-8" fill="none" stroke="currentColor" /><path d="M0 8h3v3H0zM7 1h3v3H7zM15 8h3v3h-3zM24 0h3v3h-3z" /></Svg>
        </Btn>
      </div>
      <div className="flex flex-1 items-center justify-between bg-linear-to-b from-[#575757] to-[#4a4a4a] pl-1 pr-[3px]">
        <span className="pt-px font-bold text-white">Successfully loaded 'choppage test.xrns'.</span>
        <span className="text-[22px] font-bold leading-[18px] text-[#9a9a9a]">renoise</span>
      </div>
    </footer>
  );
}

export default function App() {
  return (
    <div className="flex h-screen min-h-[1000px] flex-col overflow-hidden bg-[#333] font-['DejaVu_Sans','Verdana',sans-serif] text-[10px] leading-3">
      <Header />
      <div className="flex min-h-0 flex-1 gap-1">
        <main className="flex min-w-0 flex-1 flex-col">
          <TabStrip />
          <div className="flex min-h-0 flex-1 flex-col bg-[#515151] pb-[5px] pl-1.5 pr-[5px] pt-[5px]">
            <Scopes />
            <Rule className="my-[5px]" />
            <div className="flex min-h-0 flex-1 gap-1">
              <PatternMatrix />
              <div className="flex min-w-0 flex-1 flex-col">
                <PatternEditor />
                <EditorToolbar />
              </div>
            </div>
            <Rule className="mb-[5px] mt-1.5" />
            <div className="flex h-36 flex-none items-start gap-[7px]">
              <EffectList />
              <TrackStrip />
              <MeterStrip />
            </div>
          </div>
        </main>
        <aside className="mt-[3px] flex w-[250px] flex-none flex-col rounded-[2px] bg-[#505050] px-1.5 pt-1.5">
          <InstrumentList />
          <InstrumentProperties />
          <Rule className="mt-1.5" />
          <Browser />
        </aside>
        <Rail />
      </div>
      <StatusBar />
    </div>
  );
}
